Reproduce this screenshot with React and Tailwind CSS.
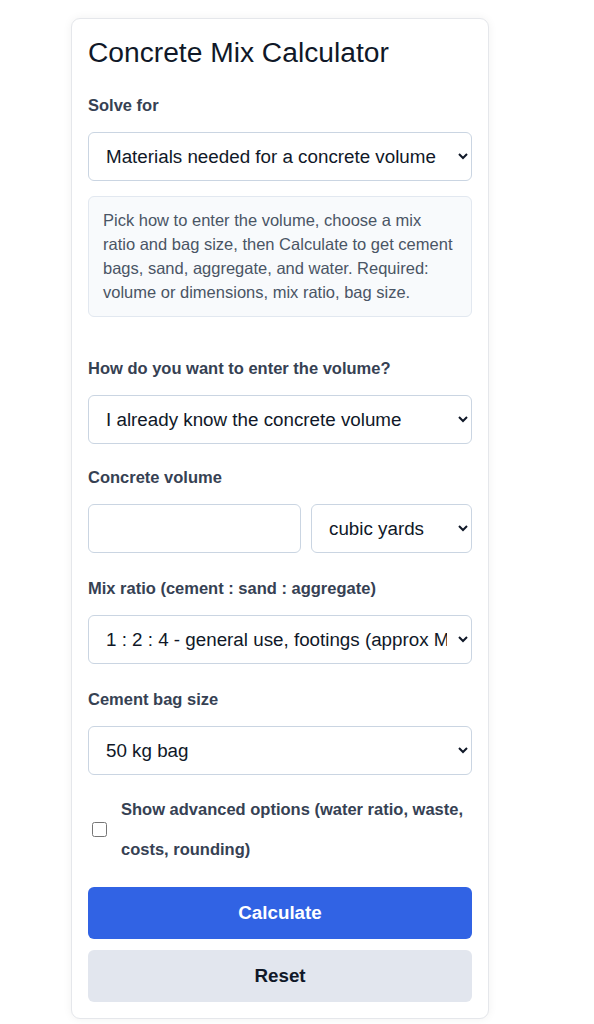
import { useState } from 'react';

const selectCls =
  'block h-[49px] w-full rounded-md border border-slate-300 bg-white pl-[13px] pr-2 text-[18.8px] text-gray-900';
const labelCls = 'mb-[15px] block text-[16.5px] font-bold leading-6 text-gray-700';

export default function App() {
  const [advanced, setAdvanced] = useState(false);

  return (
    <div className="min-h-screen bg-white pl-[71px] pt-[18px] font-['Liberation_Sans',Arial,sans-serif]">
      <div className="w-[418px] rounded-[9px] border border-gray-200 bg-white p-4 shadow-[0_0_10px_rgba(0,0,0,0.06)]">
        <h1 className="mb-6 text-[28.2px] font-normal leading-[34px] text-gray-900">Concrete Mix Calculator</h1>

        {/* Solve for */}
        <label className={labelCls}>Solve for</label>
        <select className={selectCls} defaultValue="materials">
          <option value="materials">Materials needed for a concrete volume</option>
        </select>

        <div className="mt-[15px] rounded-md border border-slate-200 bg-slate-50 px-[14px] pb-3 pt-[11px] text-[16.5px] leading-6 text-gray-600">
          Pick how to enter the volume, choose a mix ratio and bag size, then Calculate to get cement bags, sand,
          aggregate, and water. Required: volume or dimensions, mix ratio, bag size.
        </div>

        <div className="mt-[39px]">
          <label className={labelCls}>How do you want to enter the volume?</label>
          <select className={selectCls} defaultValue="known">
            <option value="known">I already know the concrete volume</option>
          </select>
        </div>

        <div className="mt-[21px]">
          <label className={labelCls}>Concrete volume</label>
          <div className="flex gap-[10px]">
            <input
              type="number"
              className="h-[49px] w-[213px] rounded-md border border-slate-300 bg-white px-4 text-[18.8px] text-gray-900"
            />
            <select className={selectCls + ' flex-1'} defaultValue="yd3">
              <option value="yd3">cubic yards</option>
            </select>
          </div>
        </div>

        <div className="mt-[23px]">
          <label className={labelCls}>Mix ratio (cement : sand : aggregate)</label>
          <select className={selectCls} defaultValue="124">
            <option value="124">1 : 2 : 4 - general use, footings (approx M15)</option>
          </select>
        </div>

        <div className="mt-[23px]">
          <label className={labelCls}>Cement bag size</label>
          <select className={selectCls} defaultValue="50">
            <option value="50">50 kg bag</option>
          </select>
        </div>

        <label className="mt-[14px] flex items-center gap-[14px]">
          <input
            type="checkbox"
            checked={advanced}
            onChange={(e) => setAdvanced(e.target.checked)}
            className="ml-1 h-[15px] w-[15px] shrink-0"
          />
          <span className="text-[16.5px] font-bold leading-10 text-gray-700">
            Show advanced options (water ratio, waste, costs, rounding)
          </span>
        </label>

        <button className="mt-[18px] block h-[52px] w-full rounded-md bg-[#3163e4] text-[18.8px] font-bold text-white">
          Calculate
        </button>
        <button className="mt-[11px] block h-[52px] w-full rounded-md bg-[#e2e6ee] text-[18.8px] font-bold text-gray-900">
          Reset
        </button>
      </div>
    </div>
  );
}
